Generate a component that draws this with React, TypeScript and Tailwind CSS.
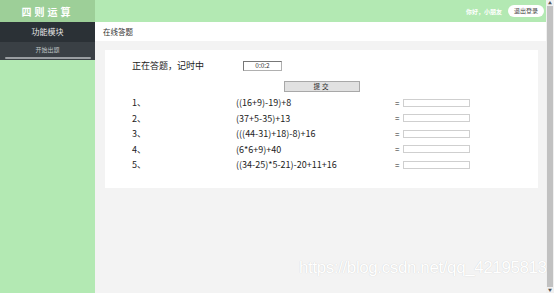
import React from 'react';

const questions = [
  { no: '1、', expr: '((16+9)-19)+8' },
  { no: '2、', expr: '(37+5-35)+13' },
  { no: '3、', expr: '(((44-31)+18)-8)+16' },
  { no: '4、', expr: '(6*6+9)+40' },
  { no: '5、', expr: '((34-25)*5-21)-20+11+16' },
];

const font = { fontFamily: '"Noto Sans CJK SC", "Liberation Sans", sans-serif' };

export default function App() {
  return (
    <div className="flex h-[293px] w-[554px] overflow-hidden bg-[#f3f3f3]" style={font}>
      {/* sidebar */}
      <div className="flex w-[95px] shrink-0 flex-col bg-[#b3e9b3]">
        <div className="flex h-[22px] items-center justify-center bg-[#9dcf98] text-[10px] font-bold tracking-[3px] text-white">
          四则运算
        </div>
        <div className="flex h-[20px] items-center justify-center bg-[#2b3136] text-[8px] text-[#e6e6e6]">
          功能模块
        </div>
        <div className="flex h-[18px] flex-col items-center justify-center bg-[#3a4045] pt-[2px]">
          <span className="text-[6px] leading-[8px] text-[#bfc2c4]">开始出题</span>
          <div className="mt-[3px] h-[2px] w-[86px] rounded-sm bg-[#9a9ea2]" />
        </div>
      </div>

      {/* main */}
      <div className="flex min-w-0 flex-1 flex-col">
        <div className="flex h-[22px] items-center justify-end gap-[6px] bg-[#b3e9b3] pr-[2px]">
          <span className="text-[6px] font-bold text-white">你好，小朋友</span>
          <button className="h-[12px] rounded-full bg-white px-[6px] text-[6px] leading-[12px] text-[#444]">
            退出登录
          </button>
        </div>
        <div className="flex h-[19px] items-center bg-white pl-[8px] text-[7.5px] text-[#333]">在线答题</div>

        <div className="relative flex-1 px-[10px] pt-[9px]">
          <div className="h-[138px] w-[433px] bg-white pl-[27px] pt-[9px] text-[9px] text-[#222]">
            <div className="flex h-[14px] items-center">
              <span className="w-[111px]">正在答题，记时中</span>
              <div className="flex h-[10px] w-[39px] items-center justify-center border border-[#b0b0b0] border-t-[#777] border-l-[#777] text-[6.5px] text-[#333]">
                0:0:2
              </div>
            </div>
            <div className="mt-[8px] flex pl-[152px]">
              <button className="flex h-[11px] w-[76px] items-center justify-center border border-[#a8a8a8] bg-[#e1e1e1] text-[6.5px] tracking-[2px] text-[#222]">
                提交
              </button>
            </div>
            <div className="mt-[3px] flex flex-col">
              {questions.map((q) => (
                <div key={q.no} className="flex h-[15.5px] items-center">
                  <span className="w-[104px]">{q.no}</span>
                  <span className="w-[159px]">{q.expr}</span>
                  <span className="w-[8px] text-[8px]">=</span>
                  <div className="h-[8px] w-[67px] border border-[#cfcfcf] bg-white" />
                </div>
              ))}
            </div>
          </div>
          <div
            className="absolute left-[204px] top-[214px] whitespace-nowrap text-[17px] tracking-[-0.4px] text-white [text-shadow:0_0_1px_rgba(0,0,0,0.18)]"
            style={{ fontFamily: '"Liberation Sans", sans-serif' }}
          >
            https://blog.csdn.net/qq_42195813
          </div>
        </div>
      </div>

      {/* scrollbar */}
      <div className="flex w-[8px] shrink-0 flex-col items-center bg-[#f0f0f0]">
        <div className="h-[6px] text-[4px] leading-[6px] text-[#555]">▲</div>
        <div className="w-[6px] flex-1 bg-[#c1c1c1]" />
        <div className="h-[6px] text-[4px] leading-[6px] text-[#555]">▼</div>
      </div>
    </div>
  );
}
